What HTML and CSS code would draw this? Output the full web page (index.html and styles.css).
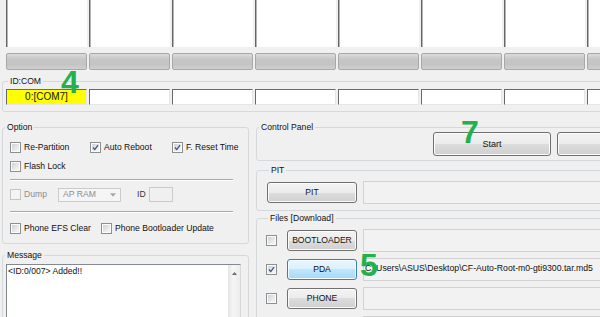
FILE: index.html
```html
<!DOCTYPE html>
<html lang="en">
<head>
<meta charset="utf-8">
<title>Odin3</title>
<link rel="stylesheet" href="styles.css">
</head>
<body>

<div class="odin">

<!-- port views -->
<div class="ports">
  <div class="port"></div><div class="port"></div><div class="port"></div><div class="port"></div>
  <div class="port"></div><div class="port"></div><div class="port"></div><div class="port"></div>
</div>

<div class="bars">
  <div class="bar"></div><div class="bar"></div><div class="bar"></div><div class="bar"></div>
  <div class="bar"></div><div class="bar"></div><div class="bar"></div><div class="bar"></div>
</div>

<fieldset class="group idcom">
  <legend>ID:COM</legend>
  <div class="coms">
    <div class="com active">0:[COM7]</div>
    <div class="com"></div><div class="com"></div><div class="com"></div>
    <div class="com"></div><div class="com"></div><div class="com"></div><div class="com"></div>
  </div>
</fieldset>

<div class="main">

  <div class="col-left">
    <fieldset class="group option">
      <legend>Option</legend>
      <div class="opt-grid">
        <label class="chk"><span class="box"></span>Re-Partition</label>
        <label class="chk"><span class="box"><svg viewBox="0 0 11 11"><path d="M2.5 5.5 L4.6 8 L8.6 2.6"/></svg></span>Auto Reboot</label>
        <label class="chk"><span class="box"><svg viewBox="0 0 11 11"><path d="M2.5 5.5 L4.6 8 L8.6 2.6"/></svg></span>F. Reset Time</label>
        <label class="chk"><span class="box"></span>Flash Lock</label>
      </div>
      <div class="sep"></div>
      <div class="dump-row">
        <label class="chk off dump"><span class="box"></span>Dump</label>
        <div class="combo">AP RAM<svg viewBox="0 0 7 4"><path d="M0 0 H7 L3.5 4 Z"/></svg></div>
        <span class="id-label">ID</span>
        <div class="id-box"></div>
      </div>
      <div class="sep"></div>
      <div class="opt-row">
        <label class="chk efs"><span class="box"></span>Phone EFS Clear</label>
        <label class="chk"><span class="box"></span>Phone Bootloader Update</label>
      </div>
    </fieldset>

    <fieldset class="group message">
      <legend>Message</legend>
      <div class="log">
        <div class="log-text">&lt;ID:0/007&gt; Added!!</div>
        <div class="vscroll"><svg viewBox="0 0 7 4"><path d="M0 4 H7 L3.5 0 Z"/></svg></div>
      </div>
    </fieldset>
  </div>

  <div class="col-right">
    <fieldset class="group control">
      <legend>Control Panel</legend>
      <div class="ctrl-btns">
        <button class="btn">Start</button>
        <button class="btn">Reset</button>
      </div>
    </fieldset>

    <fieldset class="group pit">
      <legend>PIT</legend>
      <div class="file-row">
        <button class="btn wide">PIT</button>
        <div class="path"></div>
      </div>
    </fieldset>

    <fieldset class="group files">
      <legend>Files [Download]</legend>
      <div class="file-list">
        <div class="file-row">
          <span class="box"></span>
          <button class="btn">BOOTLOADER</button>
          <div class="path"></div>
        </div>
        <div class="file-row">
          <span class="box"><svg viewBox="0 0 11 11"><path d="M2.5 5.5 L4.6 8 L8.6 2.6"/></svg></span>
          <button class="btn hot">PDA</button>
          <div class="path">C:\Users\ASUS\Desktop\CF-Auto-Root-m0-gti9300.tar.md5</div>
        </div>
        <div class="file-row">
          <span class="box"></span>
          <button class="btn">PHONE</button>
          <div class="path"></div>
        </div>
        <div class="file-row">
          <span class="box"></span>
          <button class="btn">CSC</button>
          <div class="path"></div>
        </div>
      </div>
    </fieldset>
  </div>

</div>

<!-- step numbers drawn over the window -->
<span class="mark m4">4</span>
<span class="mark m7">7</span>
<span class="mark m5">5</span>

</div>

</body>
</html>
```

FILE: styles.css
```css
html, body {
  margin: 0;
  background: #f0f0f0;
  overflow: hidden;
}
body {
  font-family: "Liberation Sans", Arial, Helvetica, sans-serif;
  font-size: 8.6px;
  line-height: 11px;
  color: #111;
}
.odin {
  position: relative;
  width: 680px;
}

/* port views and progress bars */
.ports, .bars, .coms {
  display: grid;
  grid-template-columns: repeat(8, 81px);
  column-gap: 2px;
}
.ports { padding-left: 6px; }
.port {
  height: 47px;
  background: #fff;
  border-left: 1px solid #666;
  box-shadow: inset 1px 0 #b4b4b4;
}
.bars { padding-left: 6px; margin-top: 6px; }
.bar {
  height: 17px;
  box-sizing: border-box;
  border: 1px solid #a8a8a8;
  border-radius: 2px;
  background: linear-gradient(#dcdcdc, #c6c6c6 35%, #c4c4c4 70%, #d0d0d0);
}

/* group boxes */
.group {
  margin: 0;
  padding: 0;
  min-width: 0;
  border: 1px solid #d5d9dc;
  border-radius: 3px;
}
.group legend {
  padding: 0 2px;
  margin-left: 2px;
  line-height: 11px;
}

.idcom {
  margin: 6px 0 0 2px;
  padding: 2px 0 6px 3px;
}
.com {
  height: 16px;
  box-sizing: border-box;
  background: #fff;
  border: 1px solid;
  border-color: #6a6a6a #e6e6e6 #e6e6e6 #6a6a6a;
  font-size: 10px;
  line-height: 14px;
  text-align: center;
}
.com.active { background: #ffff00; }

.main {
  display: flex;
  gap: 7px;
  margin: 10px 0 0 2px;
}
.col-left { width: 247px; flex: none; }
.col-right { width: 420px; flex: none; }

/* checkboxes */
.chk {
  display: flex;
  align-items: center;
  gap: 3px;
  white-space: nowrap;
}
.box {
  width: 11px;
  height: 11px;
  box-sizing: border-box;
  border: 1px solid #8e8f8f;
  background: linear-gradient(135deg, #c9cdd2, #eeeff0 70%, #f6f6f6);
  box-shadow: inset 0 0 0 1px #fbfbfb;
  flex: none;
}
.box svg {
  display: block;
  width: 9px;
  height: 9px;
  fill: none;
  stroke: #3d4f82;
  stroke-width: 1.5;
}
.chk.off { color: #8d8d8d; }
.chk.off .box {
  border-color: #c5c5c5;
  background: #f4f4f4;
  box-shadow: none;
}

/* option panel */
.opt-grid {
  display: grid;
  grid-template-columns: 80px 82px auto;
  grid-auto-rows: 19px;
  align-items: center;
  padding: 5px 0 0 7px;
}
.sep {
  height: 1px;
  margin: 3px 15px 0 7px;
  background: #a8a8a8;
  border-bottom: 1px solid #fff;
}
.dump-row {
  display: flex;
  align-items: center;
  height: 21px;
  margin-top: 3px;
  padding-left: 7px;
}
.dump-row + .sep { margin-top: 6px; }
.dump { width: 48px; }
.combo {
  width: 63px;
  height: 14px;
  box-sizing: border-box;
  border: 1px solid #cbcbcb;
  background: #f5f5f5;
  color: #8d8d8d;
  padding-left: 4px;
  display: flex;
  align-items: center;
  justify-content: space-between;
}
.combo svg {
  width: 6px;
  height: 4px;
  margin-right: 4px;
  fill: #a6a6a6;
}
.id-label {
  margin: 0 3px 0 16px;
  color: #333;
}
.id-box {
  width: 24px;
  height: 15px;
  box-sizing: border-box;
  border: 1px solid #cbcbcb;
  background: #f0f0f0;
}
.opt-row {
  display: flex;
  align-items: center;
  height: 19px;
  margin-top: 6px;
  padding: 0 0 5px 7px;
}
.efs { width: 91px; }

/* message log */
.message { margin-top: 6px; }
.log {
  display: flex;
  height: 80px;
  margin: 3px 7px 0 3px;
  background: #fff;
  border: 1px solid #848890;
  border-right-color: #d8d8d8;
}
.log-text {
  flex: 1;
  padding: 1px 1px;
}
.vscroll {
  width: 12px;
  background: linear-gradient(90deg, #e9e9e9, #f6f6f6 40%, #ececec);
  border-left: 1px solid #e4e4e4;
  display: flex;
  justify-content: center;
  padding-top: 7px;
  box-sizing: border-box;
}
.vscroll svg {
  width: 5px;
  height: 3px;
  fill: #6a6a6a;
}

/* buttons */
.btn {
  font: inherit;
  color: #111;
  margin: 0;
  padding: 0;
  height: 21px;
  width: 70px;
  border: 1px solid #707070;
  border-radius: 3px;
  background: linear-gradient(#f3f3f3, #ebebeb 50%, #dddddd 50%, #cfcfcf);
  box-shadow: inset 0 0 0 1px #fbfbfb;
}
.btn.hot {
  border-color: #3c7fb1;
  background: linear-gradient(#eaf6fd, #d9f0fc 50%, #bee6fd 50%, #a7d9f5);
  box-shadow: inset 0 0 0 1px #f4fbff;
}
.btn.wide { width: 90px; }

/* control panel */
.ctrl-btns {
  display: flex;
  gap: 6px;
  margin-top: -1px;
  padding: 0 0 4px 176px;
}
.ctrl-btns .btn {
  width: 135px;
  height: 24px;
  font-size: 9px;
}

/* pit and files */
.pit { margin-top: 4px; padding: 5px 0 6px 10px; }
.files { margin-top: 2px; padding: 5px 0 20px 9px; }
.file-list {
  display: flex;
  flex-direction: column;
  gap: 6px;
}
.file-row {
  display: flex;
  align-items: center;
  height: 23px;
  gap: 6px;
}
.file-row .box { margin-right: 4px; }
.path {
  flex: 1;
  height: 23px;
  box-sizing: border-box;
  border: 1px solid #d2d2d2;
  background: #f2f2f2;
  padding-left: 1px;
  line-height: 19px;
  font-size: 8.7px;
  white-space: nowrap;
}

/* step numbers */
.mark {
  position: absolute;
  font: bold 32px/1 "Liberation Sans", Arial, sans-serif;
  color: #22b14c;
}
.m4 { left: 61px; top: 66px; }
.m7 { left: 461px; top: 116px; }
.m5 { left: 360px; top: 249px; }
```
